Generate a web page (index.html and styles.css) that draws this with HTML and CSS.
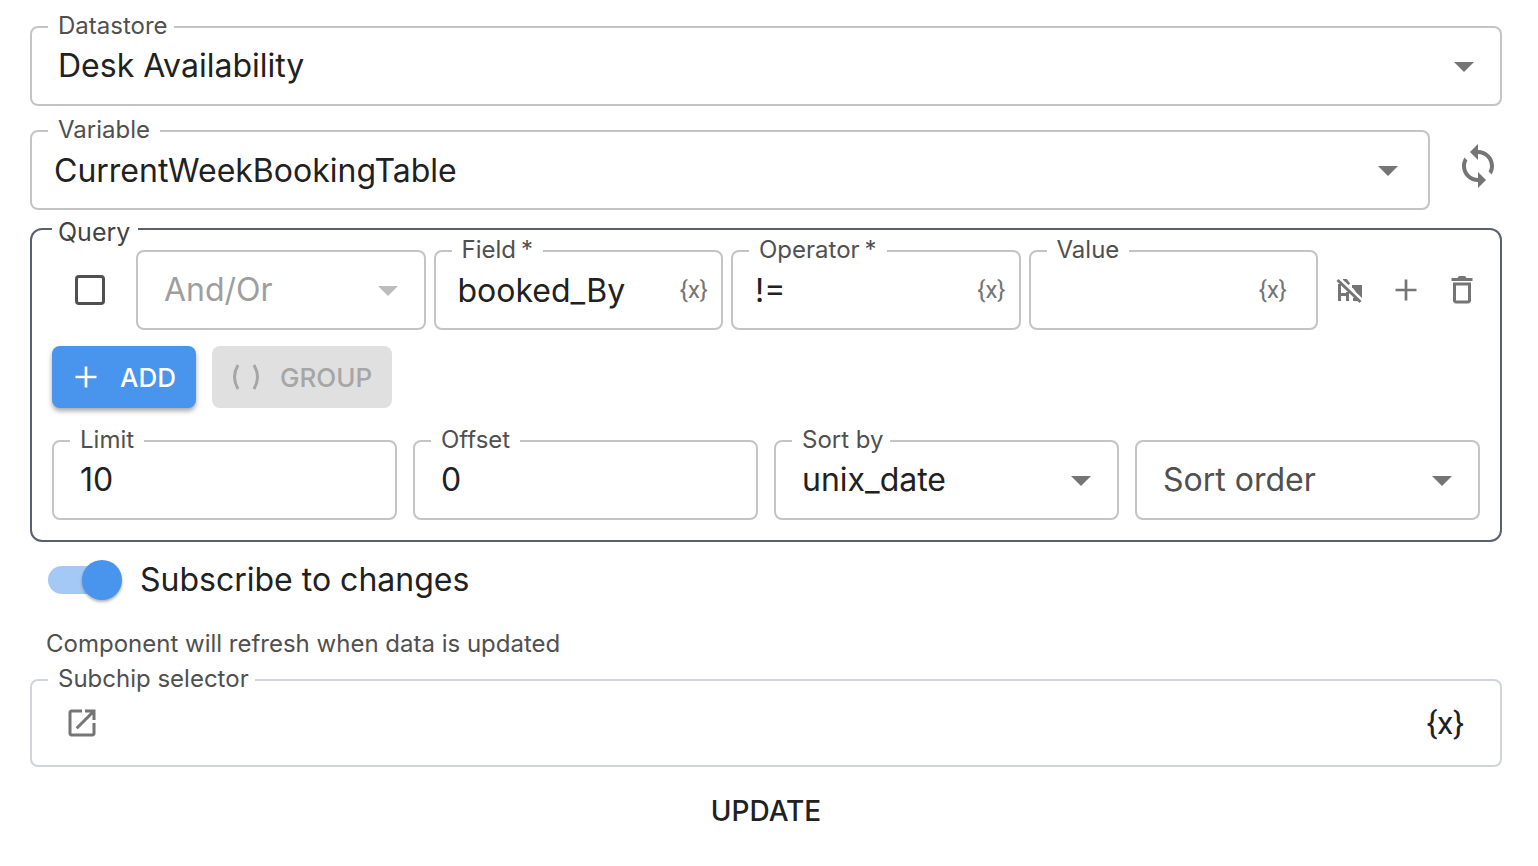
FILE: index.html
```html
<!DOCTYPE html>
<html lang="en">
<head>
<meta charset="utf-8">
<title>Datastore query</title>
<link rel="stylesheet" href="styles.css">
</head>
<body>
<form class="form">
  <div class="field">
    <label class="field-label field-label-tight" for="datastore">Datastore</label>
    <select class="control" id="datastore"><option>Desk Availability</option></select>
    <svg class="arrow" viewBox="0 0 20 10" aria-hidden="true"><path d="M0 0h20L10 10z"/></svg>
  </div>

  <div class="variable-row">
    <div class="field">
      <label class="field-label" for="variable">Variable</label>
      <input class="control control-auto" id="variable" type="text" value="CurrentWeekBookingTable">
      <svg class="arrow arrow-auto" viewBox="0 0 20 10" aria-hidden="true"><path d="M0 0h20L10 10z"/></svg>
    </div>
    <button class="icon-button sync" type="button" aria-label="Refresh">
      <svg class="icon-large" viewBox="0 0 24 24"><path d="M12 4V1L8 5l4 4V6c3.31 0 6 2.69 6 6 0 1.01-.25 1.97-.7 2.8l1.46 1.46C19.54 15.03 20 13.57 20 12c0-4.42-3.58-8-8-8zm0 14c-3.31 0-6-2.69-6-6 0-1.01.25-1.97.7-2.8L5.24 7.74C4.46 8.97 4 10.43 4 12c0 4.42 3.58 8 8 8v3l4-4-4-4v3z"/></svg>
    </button>
  </div>

  <fieldset class="query">
    <legend class="query-legend">Query</legend>
    <div class="condition">
      <input class="checkbox" type="checkbox" aria-label="Select condition">
      <div class="field">
        <select class="control control-disabled" aria-label="And/Or" disabled><option>And/Or</option></select>
        <svg class="arrow arrow-disabled" viewBox="0 0 20 10" aria-hidden="true"><path d="M0 0h20L10 10z"/></svg>
      </div>
      <div class="field">
        <label class="field-label" for="field">Field<span class="star">*</span></label>
        <input class="control control-auto" id="field" type="text" value="booked_By">
        <button class="variable-button" type="button">{x}</button>
      </div>
      <div class="field">
        <label class="field-label" for="operator">Operator<span class="star">*</span></label>
        <input class="control control-auto" id="operator" type="text" value="!=">
        <button class="variable-button" type="button">{x}</button>
      </div>
      <div class="field">
        <label class="field-label" for="value">Value</label>
        <input class="control" id="value" type="text">
        <button class="variable-button variable-button-inset" type="button">{x}</button>
      </div>
      <div class="actions">
        <button class="icon-button" type="button" aria-label="Ignore case">
          <svg class="icon" viewBox="0 0 36 36" fill="none" stroke="currentColor" stroke-width="3">
            <path d="M7.500 29V12M7 22.500h9M15.500 29V20M11 8.500h3l3 4M20 14.500h8.500V27M22 22h7M21 27.500h6"/>
            <path class="icon-gap" d="M8 7l23 22"/>
            <path d="M5.500 8l23 22"/>
          </svg>
        </button>
        <button class="icon-button" type="button" aria-label="Add condition">
          <svg class="icon" viewBox="0 0 24 24"><path d="M11.100 5h1.800v6.100H19v1.800h-6.100V19h-1.800v-6.100H5v-1.800h6.100z"/></svg>
        </button>
        <button class="icon-button" type="button" aria-label="Delete condition">
          <svg class="icon" viewBox="0 0 24 24"><path fill-rule="evenodd" d="M5 4h4q.4-1.300 1.500-1.300h3Q14.600 2.700 15 4h4v2H5zM6 7h12v12c0 1.100-.9 2-2 2H8c-1.100 0-2-.9-2-2zm2 2v10h8V9z"/></svg>
        </button>
      </div>
    </div>

    <div class="buttons">
      <button class="button button-primary" type="button">
        <svg class="icon" viewBox="0 0 24 24"><path d="M11.100 5h1.800v6.100H19v1.800h-6.100V19h-1.800v-6.100H5v-1.800h6.100z"/></svg>
        ADD
      </button>
      <button class="button button-disabled" type="button" disabled>
        <svg class="icon" viewBox="0 0 36 36"><path d="M10 6Q3 18 10 30M26 6q7 12 0 24" fill="none" stroke="currentColor" stroke-width="3"/></svg>
        GROUP
      </button>
    </div>

    <div class="options">
      <div class="field">
        <label class="field-label" for="limit">Limit</label>
        <input class="control" id="limit" type="text" value="10">
      </div>
      <div class="field">
        <label class="field-label" for="offset">Offset</label>
        <input class="control" id="offset" type="text" value="0">
      </div>
      <div class="field">
        <label class="field-label field-label-tight" for="sort-by">Sort by</label>
        <select class="control" id="sort-by"><option>unix_date</option></select>
        <svg class="arrow" viewBox="0 0 20 10" aria-hidden="true"><path d="M0 0h20L10 10z"/></svg>
      </div>
      <div class="field">
        <select class="control control-empty" aria-label="Sort order"><option>Sort order</option></select>
        <svg class="arrow" viewBox="0 0 20 10" aria-hidden="true"><path d="M0 0h20L10 10z"/></svg>
      </div>
    </div>
  </fieldset>

  <div class="subscribe">
    <input class="switch" id="subscribe" type="checkbox" role="switch" checked>
    <label for="subscribe">Subscribe to changes</label>
  </div>
  <p class="helper">Component will refresh when data is updated</p>

  <div class="field subchip" role="group" aria-labelledby="subchip-label">
    <span class="field-label field-label-tight" id="subchip-label">Subchip selector</span>
    <button class="icon-button" type="button" aria-label="Open selector">
      <svg class="icon" viewBox="0 0 24 24"><path d="M19 19H5V5h7V3H5c-1.110 0-2 .9-2 2v14c0 1.100.89 2 2 2h14c1.100 0 2-.9 2-2v-7h-2v7zM14 3v2h3.590l-9.830 9.830 1.410 1.410L19 6.410V10h2V3h-7z"/></svg>
    </button>
    <button class="subchip-variable" type="button">{x}</button>
  </div>

  <button class="update" type="submit">UPDATE</button>
</form>
</body>
</html>
```
FILE: styles.css
```css
* {
  box-sizing: border-box;
}

body {
  margin: 0;
  background: #fff;
  color: #212121;
  font-family: Inter, "Liberation Sans", sans-serif;
}

button,
input,
select {
  margin: 0;
  font: inherit;
  color: inherit;
}

button {
  padding: 0;
  border: 0;
  background: none;
  cursor: pointer;
}

svg {
  display: block;
  fill: currentColor;
}

.form {
  display: flex;
  flex-direction: column;
  padding: 26px 36px 20px 30px;
}

/* Outlined fields */

.field {
  position: relative;
  flex: 1;
  min-width: 0;
  border: 2px solid #c4c4c4;
  border-radius: 8px;
}

.field-label {
  position: absolute;
  top: -16px;
  left: 16px;
  padding: 0 10px;
  background: #fff;
  color: #505050;
  font-size: 24px;
  line-height: 28px;
  white-space: nowrap;
}

.field-label-tight {
  padding-right: 6px;
}

.star {
  margin-left: 5px;
}

.control {
  display: block;
  width: 100%;
  height: 76px;
  padding: 0 26px 2px;
  border: 0;
  border-radius: 6px;
  outline: 0;
  appearance: none;
  background: transparent;
  font-size: 32px;
}

.control-auto {
  padding: 0 22px;
}

.control-empty {
  color: #505050;
}

.control-disabled {
  color: #9e9e9e;
  opacity: 1;
}

.arrow {
  position: absolute;
  top: 34px;
  right: 26px;
  width: 20px;
  height: 10px;
  color: #757575;
  pointer-events: none;
}

.arrow-auto {
  right: 30px;
}

.arrow-disabled {
  color: #bdbdbd;
}

.variable-button {
  position: absolute;
  top: 23px;
  right: 13px;
  color: #757575;
  font-family: Roboto, "Liberation Sans", sans-serif;
  font-size: 24px;
  line-height: 30px;
}

.variable-button-inset {
  right: 29px;
}

/* Icons */

.icon-button {
  display: flex;
  justify-content: center;
  color: #757575;
}

.icon {
  width: 36px;
  height: 36px;
}

.icon-gap {
  stroke: #fff;
}

.icon-large {
  width: 48px;
  height: 48px;
}

/* Variable */

.variable-row {
  display: flex;
  align-items: center;
  gap: 24px;
  margin-top: 24px;
}

.sync {
  margin-bottom: 8px;
}

/* Query */

.query {
  min-width: 0;
  margin: 0;
  padding: 2px 20px 20px;
  border: 2px solid #596070;
  border-radius: 12px;
}

.query-legend {
  padding: 6px 8px 0 6px;
  color: #424242;
  font-size: 25px;
  line-height: 32px;
}

.condition {
  display: flex;
  align-items: center;
  gap: 8px;
}

.checkbox {
  width: 30px;
  height: 30px;
  margin: 0 23px;
  border: 3px solid #505050;
  border-radius: 4px;
  appearance: none;
}

.actions {
  display: flex;
  gap: 20px;
  margin-left: 6px;
}

.buttons {
  display: flex;
  gap: 16px;
  margin-top: 16px;
}

.button {
  display: flex;
  align-items: center;
  gap: 16px;
  height: 62px;
  padding: 0 20px 0 16px;
  border-radius: 8px;
  font-size: 26px;
  font-weight: 500;
}

.button-primary {
  background: #4994ec;
  color: #fff;
  box-shadow: 0 3px 5px rgba(0, 0, 0, 0.35);
}

.button-disabled {
  background: #e0e0e0;
  color: #a6a6a6;
}

.options {
  display: flex;
  gap: 16px;
  margin-top: 32px;
}

/* Subscription */

.subscribe {
  display: flex;
  align-items: center;
  gap: 24px;
  margin-top: 18px;
  padding-left: 18px;
  font-size: 32px;
  line-height: 40px;
}

.switch {
  position: relative;
  width: 68px;
  height: 28px;
  border-radius: 14px;
  appearance: none;
  background: #a4c9f5;
}

.switch::before {
  content: "";
  position: absolute;
  top: -6px;
  right: -6px;
  width: 40px;
  height: 40px;
  border-radius: 50%;
  background: #4994ec;
  box-shadow: 0 2px 3px rgba(0, 0, 0, 0.3);
}

.helper {
  margin: 28px 16px 0;
  color: #505050;
  font-size: 24px;
  line-height: 32px;
}

/* Subchip selector */

.subchip {
  display: flex;
  align-items: center;
  justify-content: space-between;
  margin-top: 19px;
  padding: 24px 36px 24px 32px;
  border-color: #d1d5db;
}

.subchip-variable {
  font-family: Roboto, "Liberation Sans", sans-serif;
  font-size: 32px;
  line-height: 36px;
}

.update {
  align-self: center;
  margin-top: 24px;
  font-size: 28px;
  font-weight: 500;
  line-height: 40px;
}
```
